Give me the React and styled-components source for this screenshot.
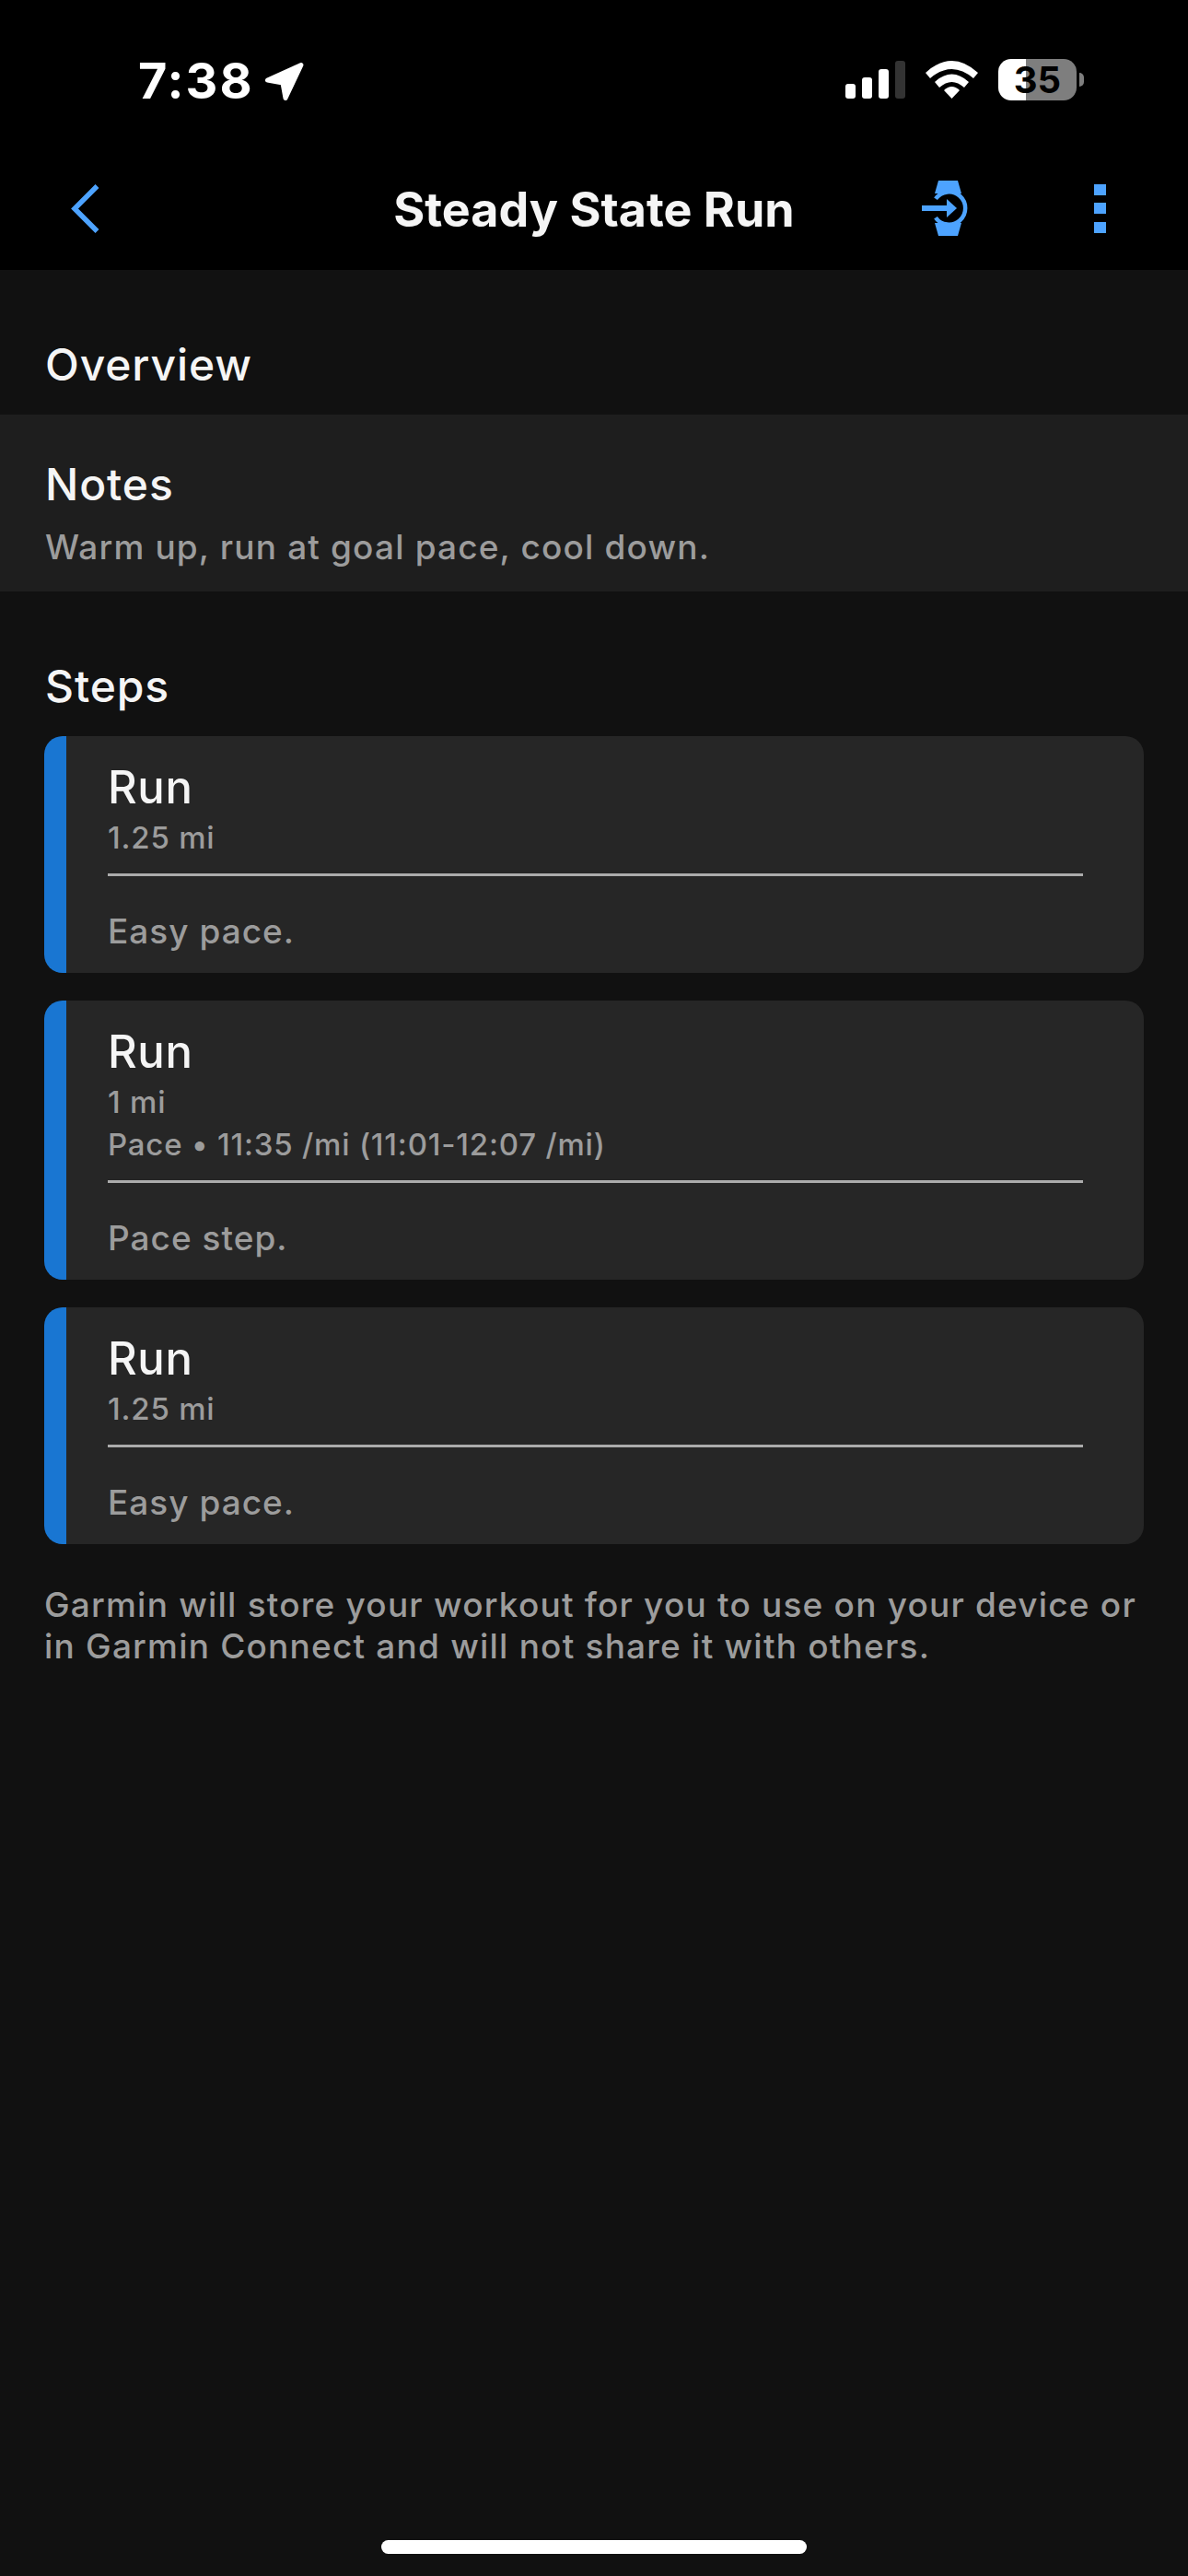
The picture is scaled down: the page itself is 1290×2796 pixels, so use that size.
import React from 'react';
import styled, { createGlobalStyle } from 'styled-components';

const GlobalStyle = createGlobalStyle`
  html, body { margin: 0; padding: 0; background: #111111; }
  * { box-sizing: border-box; }
`;

const Page = styled.div`
  width: 1290px;
  height: 2796px;
  display: flex;
  flex-direction: column;
  background: #111111;
  font-family: Inter, "Liberation Sans", sans-serif;
  color: #f5f5f5;
`;

const Header = styled.header`
  height: 293px;
  background: #000;
  display: flex;
  flex-direction: column;
`;

const StatusBar = styled.div`
  height: 148px;
  padding: 64px 121px 0 150px;
  display: flex;
  justify-content: space-between;
  align-items: flex-start;
`;

const StatusLeft = styled.div`
  display: flex;
  align-items: center;
  gap: 11px;

  svg { margin-top: 3px; }
`;

const Time = styled.span`
  font-size: 54px;
  line-height: 46px;
  font-weight: 700;
  letter-spacing: 2px;
  color: #fff;
`;

const StatusRight = styled.div`
  display: flex;
  align-items: center;
  gap: 22px;
`;

const Battery = styled.div`
  width: 85px;
  height: 45px;
  border-radius: 14px;
  background: linear-gradient(90deg, #fff 0 30px, #7e7e7e 30px);
  display: flex;
  align-items: center;
  justify-content: center;
  font-size: 40px;
  font-weight: 700;
  color: #000;
  position: relative;

  &::after {
    content: '';
    position: absolute;
    left: 88px;
    top: 15px;
    width: 5px;
    height: 15px;
    border-radius: 0 5px 5px 0;
    background: #7e7e7e;
  }
`;

const NavBar = styled.nav`
  height: 145px;
  padding: 11px 77px 0;
  display: grid;
  grid-template-columns: 1fr auto 1fr;
  align-items: center;
`;

const NavTitle = styled.h1`
  margin: 3px 0 0;
  font-size: 52px;
  line-height: 60px;
  font-weight: 700;
  color: #f5f5f5;
`;

const NavActions = styled.div`
  padding-right: 12px;
  display: flex;
  align-items: center;
  justify-content: flex-end;
  gap: 137px;
`;

const Dots = styled.div`
  display: flex;
  flex-direction: column;
  gap: 8.5px;
`;

const Dot = styled.span`
  width: 13px;
  height: 12px;
  background: #4da3ff;
`;

const SectionTitle = styled.h2`
  margin: 75px 0 26px 49px;
  font-size: 48px;
  line-height: 56px;
  font-weight: 500;
  letter-spacing: 0.9px;
`;

const NotesBand = styled.section`
  background: #1e1e1e;
  padding: 48px 49px 26px;
`;

const NotesTitle = styled.div`
  font-size: 48px;
  line-height: 56px;
  font-weight: 500;
  letter-spacing: 0.9px;
`;

const NotesText = styled.div`
  margin-top: 18px;
  font-size: 37px;
  line-height: 44px;
  font-weight: 500;
  letter-spacing: 1.15px;
  color: #9c9c9c;
`;

const Steps = styled.div`
  margin: 0 48px;
  display: flex;
  flex-direction: column;
  gap: 30px;
`;

const Card = styled.article`
  background: #262626;
  border-left: 24px solid #1976d2;
  border-radius: 20px;
  padding: 28px 66px 23px 45px;
`;

const CardTitle = styled.div`
  font-size: 49px;
  line-height: 56px;
  font-weight: 500;
  letter-spacing: 0.6px;
`;

const CardDetails = styled.div`
  margin-top: 4px;
  font-size: 33px;
  line-height: 45px;
  font-weight: 500;
  letter-spacing: 0.8px;
  color: #9c9c9c;

  div + div { margin-top: 1px; }
`;

const Divider = styled.hr`
  margin: 16px 0 38px;
  border: 0;
  height: 3px;
  background: #ababab;
`;

const CardNote = styled.div`
  font-size: 37px;
  line-height: 44px;
  font-weight: 500;
  letter-spacing: 1px;
  color: #9c9c9c;
`;

const Footer = styled.p`
  margin: 43px 48px 0 48px;
  font-size: 37px;
  line-height: 45px;
  font-weight: 500;
  letter-spacing: 1.2px;
  color: #9c9c9c;
`;

const HomeIndicator = styled.div`
  width: 462px;
  height: 15px;
  margin: auto auto 24px;
  border-radius: 8px;
  background: #fff;
`;

const LocationArrow = () => (
  <svg width="44" height="44" viewBox="0 0 44 44">
    <polygon
      points="3.5,20 40,3.5 23,39.5 20,23"
      fill="#fff"
      stroke="#fff"
      strokeWidth="5"
      strokeLinejoin="round"
    />
  </svg>
);

const Signal = () => (
  <svg width="65" height="41" viewBox="0 0 65 41">
    <rect x="0" y="25" width="11" height="16" rx="3" fill="#fff" />
    <rect x="18" y="18" width="11" height="23" rx="3" fill="#fff" />
    <rect x="36" y="9" width="11" height="32" rx="3" fill="#fff" />
    <rect x="54" y="0" width="11" height="41" rx="3" fill="#333" />
  </svg>
);

const Wifi = () => (
  <svg width="57" height="41" viewBox="0 0 57 41">
    <path d="M0 13 Q28.5 -13 57 13 L52 19 Q28.5 -1 5 19 Z" fill="#fff" />
    <path d="M10 23 Q28.5 6 47 23 L42 29 Q28.5 17 15 29 Z" fill="#fff" />
    <path d="M20 32 Q28.5 24 37 32 L28.5 41 Z" fill="#fff" />
  </svg>
);

const Chevron = () => (
  <svg width="31" height="53" viewBox="0 0 31 53">
    <path d="M28.5 2 L4 26.5 L28.5 51" fill="none" stroke="#4da3ff" strokeWidth="5.5" />
  </svg>
);

const WatchSend = () => (
  <svg width="50" height="60" viewBox="0 0 50 60">
    <path d="M18 0 H39 L43 14 H14 Z" fill="#4da3ff" />
    <path d="M14 46 H43 L39 60 H18 Z" fill="#4da3ff" />
    <path
      d="M15 19.8 A17.7 17.7 0 1 1 15 40.2"
      fill="none"
      stroke="#4da3ff"
      strokeWidth="4.5"
    />
    <rect x="0" y="27" width="29" height="6" fill="#4da3ff" />
    <path d="M27 20 L38 30 L27 40 Z" fill="#4da3ff" />
  </svg>
);

const steps = [
  { id: 1, details: ['1.25 mi'], note: 'Easy pace.' },
  { id: 2, details: ['1 mi', 'Pace • 11:35 /mi (11:01-12:07 /mi)'], note: 'Pace step.' },
  { id: 3, details: ['1.25 mi'], note: 'Easy pace.' },
];

export default function App() {
  return (
    <Page>
      <GlobalStyle />
      <Header>
        <StatusBar>
          <StatusLeft>
            <Time>7:38</Time>
            <LocationArrow />
          </StatusLeft>
          <StatusRight>
            <Signal />
            <Wifi />
            <Battery>35</Battery>
          </StatusRight>
        </StatusBar>
        <NavBar>
          <Chevron />
          <NavTitle>Steady State Run</NavTitle>
          <NavActions>
            <WatchSend />
            <Dots>
              <Dot />
              <Dot />
              <Dot />
            </Dots>
          </NavActions>
        </NavBar>
      </Header>

      <SectionTitle>Overview</SectionTitle>
      <NotesBand>
        <NotesTitle>Notes</NotesTitle>
        <NotesText>Warm up, run at goal pace, cool down.</NotesText>
      </NotesBand>

      <SectionTitle>Steps</SectionTitle>
      <Steps>
        {steps.map((step) => (
          <Card key={step.id}>
            <CardTitle>Run</CardTitle>
            <CardDetails>
              {step.details.map((line) => (
                <div key={line}>{line}</div>
              ))}
            </CardDetails>
            <Divider />
            <CardNote>{step.note}</CardNote>
          </Card>
        ))}
      </Steps>

      <Footer>
        Garmin will store your workout for you to use on your device or
        <br />
        in Garmin Connect and will not share it with others.
      </Footer>
      <HomeIndicator />
    </Page>
  );
}
